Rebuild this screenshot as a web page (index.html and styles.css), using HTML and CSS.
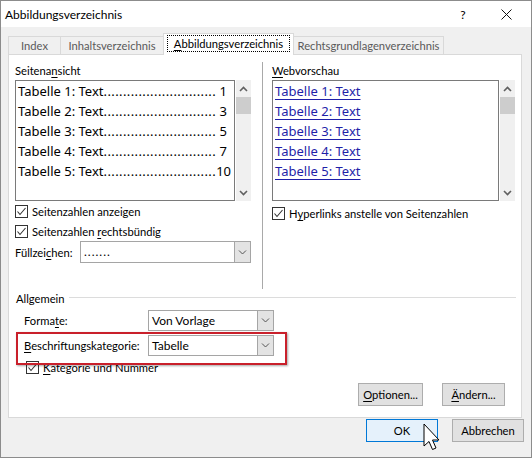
FILE: index.html
```html
<!DOCTYPE html>
<html lang="de">
<head>
<meta charset="utf-8">
<title>Abbildungsverzeichnis</title>
<link rel="stylesheet" href="styles.css">
</head>
<body>
<div class="window">
  <div class="titlebar">
    <span class="title">Abbildungsverzeichnis</span>
    <span class="cap help">?</span>
    <span class="cap close"><svg width="11" height="11" viewBox="0 0 11 11"><path d="M0.5 0.5L10.5 10.5M10.5 0.5L0.5 10.5" stroke="#111" stroke-width="1" fill="none"/></svg></span>
  </div>

  <div class="tabs">
    <div class="tab t-index">Index</div>
    <div class="tab t-inhalt">Inhaltsverzeichnis</div>
    <div class="tab active t-abb"><span class="focus"><u>A</u>bbildungsverzeichnis</span></div>
    <div class="tab t-rechts">Rechtsgrundlagenverzeichnis</div>
  </div>

  <div class="panel">
    <div class="top">
      <div class="col left">
        <div class="label">Seitena<u>n</u>sicht</div>
        <div class="listwrap">
          <div class="list list-left">
            <div class="item"><span class="it">Tabelle 1: Text<span class="dots">.............................</span></span><span class="num">1</span></div>
            <div class="item"><span class="it">Tabelle 2: Text<span class="dots">.............................</span></span><span class="num">3</span></div>
            <div class="item"><span class="it">Tabelle 3: Text<span class="dots">.............................</span></span><span class="num">5</span></div>
            <div class="item"><span class="it">Tabelle 4: Text<span class="dots">.............................</span></span><span class="num">7</span></div>
            <div class="item"><span class="it">Tabelle 5: Text<span class="dots">.............................</span></span><span class="num">10</span></div>
          </div>
          <div class="scroll">
            <div class="arrow"><svg width="9" height="6" viewBox="0 0 9 6"><path d="M1 5L4.5 1.5L8 5" stroke="#606060" stroke-width="1.6" fill="none"/></svg></div>
            <div class="thumb"></div>
            <div class="track"></div>
            <div class="arrow"><svg width="9" height="6" viewBox="0 0 9 6"><path d="M1 1L4.5 4.5L8 1" stroke="#606060" stroke-width="1.6" fill="none"/></svg></div>
          </div>
        </div>
        <div class="check"><span class="box"><svg width="11" height="11" viewBox="0 0 11 11"><path d="M1.5 5.5L4 8.5L9.5 2" stroke="#333" stroke-width="1.1" fill="none"/></svg></span><span>Seitenzahlen anzeigen</span></div>
        <div class="check"><span class="box"><svg width="11" height="11" viewBox="0 0 11 11"><path d="M1.5 5.5L4 8.5L9.5 2" stroke="#333" stroke-width="1.1" fill="none"/></svg></span><span>Seitenzahlen <u>r</u>echtsbündig</span></div>
        <div class="fill-row">
          <span class="fill-label">Füllzei<u>c</u>hen:</span>
          <div class="combo combo-fill"><span class="cv cv-dots">.......</span><span class="dd"><svg width="9" height="5" viewBox="0 0 9 5"><path d="M1 0.5L4.5 4L8 0.5" stroke="#555" stroke-width="1" fill="none"/></svg></span></div>
        </div>
      </div>
      <div class="vline"></div>
      <div class="col right">
        <div class="label"><u>W</u>ebvorschau</div>
        <div class="listwrap">
          <div class="list list-right">
            <div class="item"><span class="link">Tabelle 1: Text</span></div>
            <div class="item"><span class="link">Tabelle 2: Text</span></div>
            <div class="item"><span class="link">Tabelle 3: Text</span></div>
            <div class="item"><span class="link">Tabelle 4: Text</span></div>
            <div class="item"><span class="link">Tabelle 5: Text</span></div>
          </div>
          <div class="scroll">
            <div class="arrow"><svg width="9" height="6" viewBox="0 0 9 6"><path d="M1 5L4.5 1.5L8 5" stroke="#606060" stroke-width="1.6" fill="none"/></svg></div>
            <div class="thumb"></div>
            <div class="track"></div>
            <div class="arrow"><svg width="9" height="6" viewBox="0 0 9 6"><path d="M1 1L4.5 4.5L8 1" stroke="#606060" stroke-width="1.6" fill="none"/></svg></div>
          </div>
        </div>
        <div class="check"><span class="box"><svg width="11" height="11" viewBox="0 0 11 11"><path d="M1.5 5.5L4 8.5L9.5 2" stroke="#333" stroke-width="1.1" fill="none"/></svg></span><span>H<u>y</u>perlinks anstelle von Seitenzahlen</span></div>
      </div>
    </div>

    <div class="group">
      <div class="group-head"><span>Allgemein</span><span class="gline"></span></div>
      <div class="form-row">
        <span class="form-label">Forma<u>t</u>e:</span>
        <div class="combo combo-form"><span class="cv">Von Vorlage</span><span class="dd"><svg width="9" height="5" viewBox="0 0 9 5"><path d="M1 0.5L4.5 4L8 0.5" stroke="#555" stroke-width="1" fill="none"/></svg></span></div>
      </div>
      <div class="form-row">
        <span class="form-label"><u>B</u>eschriftungskategorie:</span>
        <div class="combo combo-form"><span class="cv">Tabelle</span><span class="dd"><svg width="9" height="5" viewBox="0 0 9 5"><path d="M1 0.5L4.5 4L8 0.5" stroke="#555" stroke-width="1" fill="none"/></svg></span></div>
      </div>
      <div class="check check-kat"><span class="box"><svg width="11" height="11" viewBox="0 0 11 11"><path d="M1.5 5.5L4 8.5L9.5 2" stroke="#333" stroke-width="1.1" fill="none"/></svg></span><span><u>K</u>ategorie und Nummer</span></div>
    </div>

    <div class="panel-buttons">
      <div class="btn btn-opt"><u>O</u>ptionen...</div>
      <div class="btn btn-aend"><u>Ä</u>ndern...</div>
    </div>

    <div class="highlight"></div>
  </div>

  <div class="footer">
    <div class="btn btn-ok">OK</div>
    <div class="btn btn-cancel">Abbrechen</div>
  </div>

  <svg class="cursor" width="18" height="28" viewBox="0 0 18 28"><path d="M1 1L1 23L6 18.5L9.5 26.5L13 25L9.5 17L16 17Z" fill="#fff" stroke="#000" stroke-width="1" stroke-linejoin="miter"/></svg>
</div>
</body>
</html>
```

FILE: styles.css
```css
* { box-sizing: border-box; }
html, body { margin: 0; padding: 0; background: #fff; }
body {
  font-family: Lato, "Noto Sans", "Liberation Sans", sans-serif;
  font-size: 11.2px;
  color: #000;
}
u { text-decoration: underline; text-underline-offset: 2px; }

.window {
  position: relative;
  width: 532px;
  height: 458px;
  border: 1px solid #8c8c8c;
  background: #f0f0f0;
  overflow: hidden;
}

.titlebar {
  height: 26px;
  background: #fff;
  display: flex;
  align-items: center;
  padding-left: 4px;
}
.title { flex: 1; font-size: 12px; }
.cap {
  height: 26px;
  display: flex;
  align-items: center;
  justify-content: center;
}
.help { width: 40px; font-size: 12px; }
.close { width: 46px; margin-right: 2px; }

/* tabs */
.tabs {
  display: flex;
  align-items: flex-end;
  height: 21px;
  margin-top: 6px;
  padding-left: 7px;
  position: relative;
  z-index: 2;
}
.tab {
  height: 18px;
  border: 1px solid #d9d9d9;
  border-bottom: none;
  background: #f0f0f0;
  color: #5a5a5a;
  display: flex;
  align-items: center;
  justify-content: center;
  margin-left: -1px;
  line-height: 16px;
  white-space: nowrap;
}
.t-index { width: 53px; margin-left: 0; }
.t-inhalt { width: 104px; }
.t-abb { width: 131px; }
.t-rechts { width: 151px; }
.tab.active {
  height: 22px;
  margin-bottom: -1px;
  background: #fff;
  color: #000;
  padding-bottom: 2px;
}
.focus {
  display: flex;
  align-items: center;
  justify-content: center;
  width: 123px;
  height: 17px;
  outline: 1px dotted #000;
  outline-offset: -1px;
}

/* panel */
.panel {
  position: relative;
  margin-left: 7px;
  width: 514px;
  height: 364px;
  border: 1px solid #d9d9d9;
  background: #fff;
  z-index: 1;
}
.top {
  display: flex;
  height: 234px;
  padding-left: 6px;
}
.col { display: flex; flex-direction: column; }
.left { width: 237px; }
.right { width: 244px; }
.vline {
  width: 1px;
  background: #a9a9a9;
  margin: 7px 9px 0 10px;
}
.label {
  height: 17px;
  margin-top: 8px;
  line-height: 16px;
}

.listwrap {
  display: flex;
  height: 121px;
}
.list {
  border: 1px solid #7a7a7a;
  height: 121px;
  background: #fff;
  font-family: "Noto Sans", Lato, sans-serif;
  font-size: 13px;
}
.list-left { width: 220px; padding: 0 7px 0 2px; }
.list-right { width: 227px; padding-left: 2px; }
.item {
  height: 20px;
  line-height: 20px;
  display: flex;
  white-space: nowrap;
}
.it { flex: none; }
.dots { letter-spacing: 0.4px; }
.num { flex: none; margin-left: auto; }
.link { color: #1f1fa8; text-decoration: underline; text-underline-offset: 3px; }

.scroll {
  width: 15px;
  margin-left: 1px;
  background: #f0f0f0;
  display: flex;
  flex-direction: column;
}
.arrow {
  height: 17px;
  display: flex;
  align-items: center;
  justify-content: center;
}
.thumb { height: 17px; background: #cdcdcd; }
.track { flex: 1; }

.check {
  display: flex;
  align-items: center;
  height: 20px;
}
.left .check:first-of-type, .right .check { margin-top: 2px; }
.box {
  width: 13px;
  height: 13px;
  border: 1px solid #333;
  background: #fff;
  margin-right: 4px;
  display: flex;
  align-items: center;
  justify-content: center;
  flex: none;
}

.fill-row {
  display: flex;
  align-items: center;
  height: 22px;
}
.fill-label { width: 65px; }
.combo {
  display: flex;
  height: 22px;
  border: 1px solid #a5a5a5;
  background: #fff;
}
.combo-fill { width: 171px; }
.cv { flex: 1; padding-left: 3px; line-height: 20px; font-size: 12px; }
.cv-dots { letter-spacing: 1px; }
.dd {
  width: 16px;
  background: #e3e3e3;
  border-left: 1px solid #a5a5a5;
  display: flex;
  align-items: center;
  justify-content: center;
}

/* group */
.group { padding-left: 7px; padding-right: 5px; }
.group-head {
  display: flex;
  align-items: center;
  height: 16px;
  margin-top: 1px;
}
.gline { flex: 1; height: 1px; background: #dcdcdc; margin-left: 4px; margin-top: -1px; }
.form-row {
  display: flex;
  align-items: center;
  height: 21px;
  margin-top: 4px;
  padding-left: 8px;
}
.form-row:first-of-type { margin-top: 9px; }
.form-label { width: 124px; white-space: nowrap; }
.combo-form { width: 126px; height: 21px; }
.combo-form .cv { line-height: 19px; }
.check-kat { padding-left: 10px; height: 16px; margin-top: 3px; }

.panel-buttons {
  display: flex;
  justify-content: flex-end;
  gap: 19px;
  padding-right: 16px;
  margin-top: 8px;
}
.btn {
  height: 23px;
  border: 1px solid #adadad;
  background: #e1e1e1;
  display: flex;
  align-items: center;
  justify-content: center;
}
.btn-opt { width: 65px; }
.btn-aend { width: 63px; }

.highlight {
  position: absolute;
  left: 7px;
  top: 277px;
  width: 271px;
  height: 33px;
  border: 2px solid #c9202b;
  box-shadow: 1px 1px 2px rgba(0,0,0,0.35);
}

.footer {
  display: flex;
  justify-content: flex-end;
  gap: 14px;
  padding-right: 7px;
  margin-top: 1px;
}
.btn-ok, .btn-cancel { width: 72px; }
.btn-ok { background: #e5f1fb; border-color: #0078d7; }

.cursor {
  position: absolute;
  left: 422px;
  top: 422px;
}
```
